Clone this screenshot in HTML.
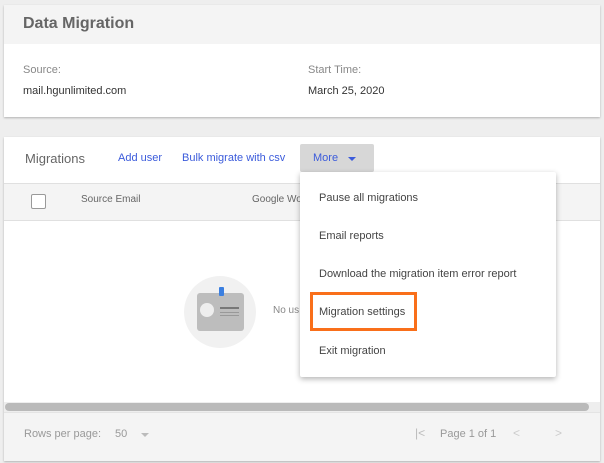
<!DOCTYPE html>
<html><head><style>
*{margin:0;padding:0;box-sizing:border-box}
body{width:604px;height:463px;background:#eeeeee;font-family:"Liberation Sans",Arial,sans-serif;position:relative;overflow:hidden;color:#333}
.a{position:absolute}
.card{background:#fff;box-shadow:0 1px 2px rgba(0,0,0,.25)}
.t{font-size:11px;white-space:nowrap}
</style></head><body>
<div class="a card" style="left:4px;top:5px;width:596px;height:112px">
  <div class="a" style="left:0;top:0;width:596px;height:39px;background:#f4f4f4"></div>
  <div class="a" style="left:19px;top:10px;font-size:16px;font-weight:bold;color:#666">Data Migration</div>
  <div class="a t" style="left:19px;top:59px;color:#888">Source:</div>
  <div class="a t" style="left:19px;top:80px;color:#333">mail.hgunlimited.com</div>
  <div class="a t" style="left:304px;top:59px;color:#888">Start Time:</div>
  <div class="a t" style="left:304px;top:80px;color:#333">March 25, 2020</div>
</div>
<div class="a card" style="left:4px;top:137px;width:596px;height:324px">
  <div class="a" style="left:21px;top:14px;font-size:13px;color:#666">Migrations</div>
  <div class="a t" style="left:114px;top:15px;color:#3b5bdb">Add user</div>
  <div class="a t" style="left:178px;top:15px;color:#3b5bdb">Bulk migrate with csv</div>
  <div class="a" style="left:296px;top:7px;width:74px;height:28px;background:#d7d7d7;border-radius:2px"></div>
  <div class="a t" style="left:309px;top:15px;color:#3b5bdb">More</div>
  <div class="a" style="left:344px;top:20px;width:0;height:0;border-left:4px solid transparent;border-right:4px solid transparent;border-top:4px solid #3b5bdb"></div>
  <div class="a" style="left:0;top:46px;width:596px;height:38px;background:#f4f4f4;border-top:1px solid #e0e0e0;border-bottom:1px solid #e0e0e0"></div>
  <div class="a" style="left:27px;top:57px;width:15px;height:15px;border:1px solid #999;border-radius:2px;background:#fff"></div>
  <div class="a" style="left:77px;top:57px;font-size:10px;color:#666">Source Email</div>
  <div class="a" style="left:248px;top:57px;font-size:10px;color:#666">Google Wo</div>
  <div class="a" style="left:180px;top:139px;width:72px;height:72px;border-radius:50%;background:#f1f1f1"></div>
  <div class="a" style="left:193px;top:156px;width:47px;height:38px;border-radius:3px;background:#bdbdbd"></div>
  <div class="a" style="left:215px;top:150px;width:5px;height:9px;border-radius:1px;background:#3b7fe0"></div>
  <div class="a" style="left:196px;top:166px;width:14px;height:14px;border-radius:50%;background:#eee"></div>
  <div class="a" style="left:216px;top:170px;width:19px;height:2px;background:#777"></div>
  <div class="a" style="left:216px;top:175px;width:19px;height:1px;background:#999"></div>
  <div class="a" style="left:216px;top:178px;width:19px;height:1px;background:#999"></div>
  <div class="a" style="left:269px;top:168px;font-size:10px;color:#888">No us</div>
  <div class="a" style="left:0;top:265px;width:596px;height:10px;background:#eee"></div>
  <div class="a" style="left:1px;top:266px;width:584px;height:8px;background:#bababa;border-radius:4px"></div>
  <div class="a" style="left:0;top:275px;width:596px;height:49px;background:#f4f4f4;border-top:1px solid #e4e4e4"></div>
  <div class="a" style="left:20px;top:291px;font-size:11px;color:#999">Rows per page:</div>
  <div class="a" style="left:111px;top:291px;font-size:11px;color:#999">50</div>
  <div class="a" style="left:137px;top:296px;border-left:4px solid transparent;border-right:4px solid transparent;border-top:4px solid #bbb"></div>
  <div class="a" style="left:411px;top:289px;font-size:12px;color:#bbb">|&lt;</div>
  <div class="a" style="left:436px;top:291px;font-size:11px;color:#999">Page 1 of 1</div>
  <div class="a" style="left:509px;top:289px;font-size:12px;color:#ccc">&lt;</div>
  <div class="a" style="left:551px;top:289px;font-size:12px;color:#ccc">&gt;</div>
</div>
<div class="a" style="left:300px;top:172px;width:256px;height:205px;background:#fff;box-shadow:0 2px 6px rgba(0,0,0,.3);border-radius:2px">
  <div class="a t" style="left:19px;top:20px;color:#444">Pause all migrations</div>
  <div class="a t" style="left:19px;top:58px;color:#444">Email reports</div>
  <div class="a t" style="left:19px;top:96px;color:#444">Download the migration item error report</div>
  <div class="a" style="left:10px;top:120px;width:107px;height:39px;border:3px solid #f96f1a"></div>
  <div class="a t" style="left:19px;top:134px;color:#444">Migration settings</div>
  <div class="a t" style="left:19px;top:173px;color:#444">Exit migration</div>
</div>
</body></html>
